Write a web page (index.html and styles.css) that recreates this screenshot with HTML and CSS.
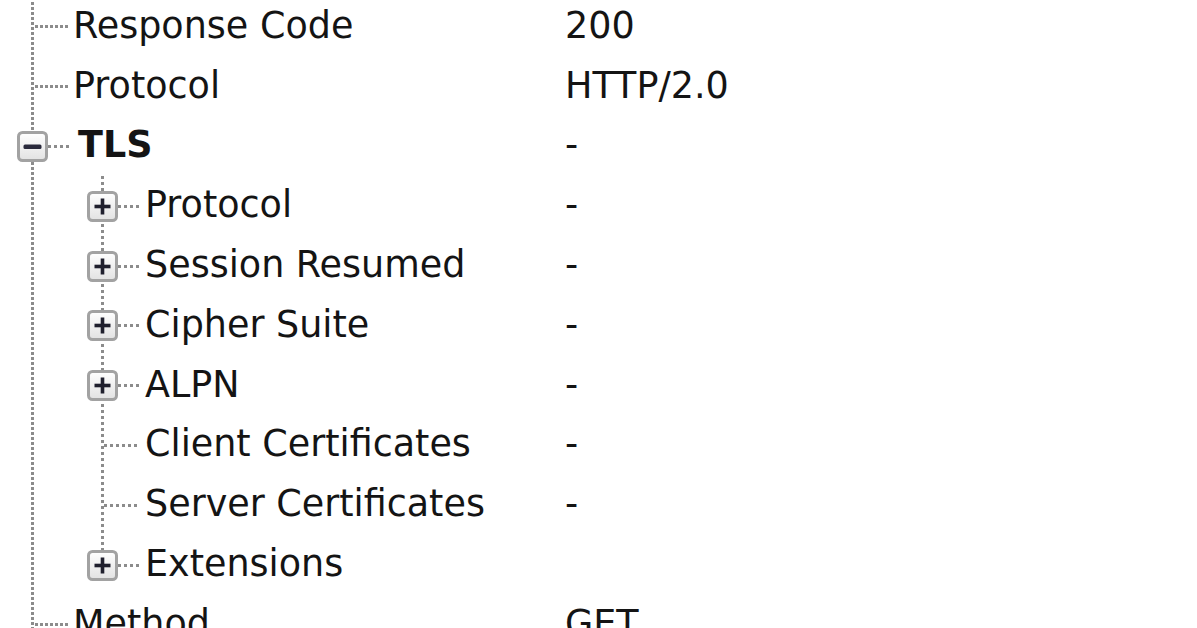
FILE: index.html
```html
<!DOCTYPE html>
<html>
<head>
<meta charset="utf-8">
<link rel="stylesheet" href="styles.css">
</head>
<body>
<svg width="0" height="0" class="defs">
  <defs>
    <linearGradient id="boxfill" x1="0" y1="0" x2="0" y2="1">
      <stop offset="0" stop-color="#ffffff"/>
      <stop offset="1" stop-color="#e2e2e2"/>
    </linearGradient>
  </defs>
</svg>
<div class="tree">
  <ul class="level level1">
    <li class="row leaf1"><div class="name"><span class="conn"></span><span class="label">Response Code</span></div><div class="value">200</div></li>
    <li class="row leaf1"><div class="name"><span class="conn"></span><span class="label">Protocol</span></div><div class="value">HTTP/2.0</div></li>
    <li class="group">
      <div class="row branch1">
        <div class="name">
          <svg class="toggle" width="31" height="31" viewBox="0 0 31 31"><rect x="1.5" y="1.5" width="28" height="28" rx="4" fill="url(#boxfill)" stroke="#a2a2a2" stroke-width="3"/><rect x="6.5" y="13.5" width="18" height="4.5" rx="1.5" fill="#2a2a3c"/></svg>
          <span class="conn"></span><span class="label bold">TLS</span>
        </div>
        <div class="value">-</div>
      </div>
      <ul class="level level2">
        <li class="row branch2"><div class="name"><svg class="toggle" width="31" height="31" viewBox="0 0 31 31"><rect x="1.5" y="1.5" width="28" height="28" rx="4" fill="url(#boxfill)" stroke="#a2a2a2" stroke-width="3"/><rect x="7.5" y="13.7" width="16" height="3.6" fill="#20202e"/><rect x="13.7" y="7.5" width="3.6" height="16" fill="#20202e"/></svg><span class="conn"></span><span class="label">Protocol</span></div><div class="value">-</div></li>
        <li class="row branch2"><div class="name"><svg class="toggle" width="31" height="31" viewBox="0 0 31 31"><rect x="1.5" y="1.5" width="28" height="28" rx="4" fill="url(#boxfill)" stroke="#a2a2a2" stroke-width="3"/><rect x="7.5" y="13.7" width="16" height="3.6" fill="#20202e"/><rect x="13.7" y="7.5" width="3.6" height="16" fill="#20202e"/></svg><span class="conn"></span><span class="label">Session Resumed</span></div><div class="value">-</div></li>
        <li class="row branch2"><div class="name"><svg class="toggle" width="31" height="31" viewBox="0 0 31 31"><rect x="1.5" y="1.5" width="28" height="28" rx="4" fill="url(#boxfill)" stroke="#a2a2a2" stroke-width="3"/><rect x="7.5" y="13.7" width="16" height="3.6" fill="#20202e"/><rect x="13.7" y="7.5" width="3.6" height="16" fill="#20202e"/></svg><span class="conn"></span><span class="label">Cipher Suite</span></div><div class="value">-</div></li>
        <li class="row branch2"><div class="name"><svg class="toggle" width="31" height="31" viewBox="0 0 31 31"><rect x="1.5" y="1.5" width="28" height="28" rx="4" fill="url(#boxfill)" stroke="#a2a2a2" stroke-width="3"/><rect x="7.5" y="13.7" width="16" height="3.6" fill="#20202e"/><rect x="13.7" y="7.5" width="3.6" height="16" fill="#20202e"/></svg><span class="conn"></span><span class="label">ALPN</span></div><div class="value">-</div></li>
        <li class="row leaf2"><div class="name"><span class="conn"></span><span class="label">Client Certificates</span></div><div class="value">-</div></li>
        <li class="row leaf2"><div class="name"><span class="conn"></span><span class="label">Server Certificates</span></div><div class="value">-</div></li>
        <li class="row branch2"><div class="name"><svg class="toggle" width="31" height="31" viewBox="0 0 31 31"><rect x="1.5" y="1.5" width="28" height="28" rx="4" fill="url(#boxfill)" stroke="#a2a2a2" stroke-width="3"/><rect x="7.5" y="13.7" width="16" height="3.6" fill="#20202e"/><rect x="13.7" y="7.5" width="3.6" height="16" fill="#20202e"/></svg><span class="conn"></span><span class="label">Extensions</span></div><div class="value"></div></li>
      </ul>
    </li>
    <li class="row leaf1"><div class="name"><span class="conn"></span><span class="label">Method</span></div><div class="value">GET</div></li>
  </ul>
</div>
</body>
</html>
```

FILE: styles.css
```css
html, body {
  margin: 0;
  padding: 0;
  background: #ffffff;
  overflow: hidden;
}

.defs {
  display: block;
  height: 0;
  width: 0;
}

.tree {
  font-family: "DejaVu Sans", Verdana, sans-serif;
  font-size: 36.5px;
  color: #141414;
  margin-top: -3px;
  height: 700px;
  background-image: repeating-linear-gradient(to bottom, #8c8c8c 0 3px, transparent 3px 5px);
  background-size: 3px 100%;
  background-position: 31px 0;
  background-repeat: no-repeat;
}

.level {
  list-style: none;
  margin: 0;
  padding: 0;
}

.level2 {
  background-image: repeating-linear-gradient(to bottom, #8c8c8c 0 3px, transparent 3px 6px);
  background-size: 3px calc(100% - 30px);
  background-position: 101px 0;
  background-repeat: no-repeat;
}

.row {
  display: grid;
  grid-template-columns: 565px 1fr;
  height: 59.8px;
  align-items: center;
}

.name {
  display: flex;
  align-items: center;
  height: 100%;
  white-space: nowrap;
}

.conn {
  height: 3px;
  background-image: repeating-linear-gradient(to right, #8c8c8c 0 3px, transparent 3px 6px);
  flex: none;
}

.label {
  margin-bottom: 3px;
}

.bold {
  font-weight: bold;
}

.toggle {
  flex: none;
  display: block;
}

/* level 1 leaf */
.leaf1 .name {
  padding-left: 35px;
}
.leaf1 .conn {
  width: 35px;
  margin-right: 3px;
  background-image: repeating-linear-gradient(to right, #8c8c8c 0 3px, transparent 3px 5px);
}

/* level 1 branch (TLS) */
.branch1 .name {
  padding-left: 17px;
}
.branch1 .conn {
  width: 24px;
  margin-right: 6px;
}

/* level 2 branch */
.branch2 .name {
  padding-left: 87px;
}
.branch2 .conn {
  width: 22px;
  margin-right: 5px;
}

/* level 2 leaf */
.leaf2 .name {
  padding-left: 104px;
}
.leaf2 .conn {
  width: 36px;
  margin-right: 5px;
}

.value {
  margin-bottom: 3px;
  white-space: nowrap;
}
```
